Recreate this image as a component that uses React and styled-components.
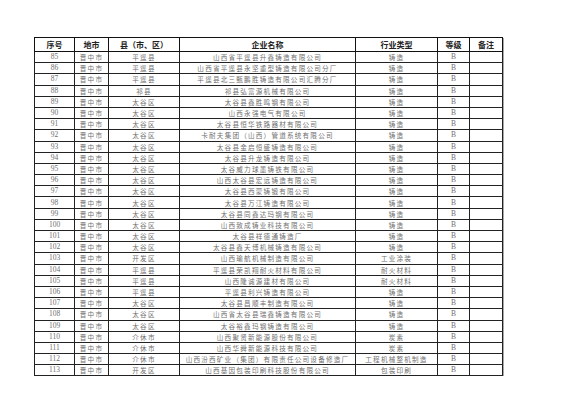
import React from 'react';
import styled, { createGlobalStyle } from 'styled-components';

const GlobalStyle = createGlobalStyle`
  html, body {
    margin: 0;
    padding: 0;
    background: #ffffff;
  }
`;

const rows = [
    [85, '晋中市', '平遥县', '山西省平遥县升鑫铸造有限公司', '铸造'],
    [86, '晋中市', '平遥县', '山西省平遥县永坚重型铸造有限公司分厂', '铸造'],
    [87, '晋中市', '平遥县', '平遥县北三甄鹏胜铸造有限公司汇腾分厂', '铸造'],
    [88, '晋中市', '祁县', '祁县弘富源机械有限公司', '铸造'],
    [89, '晋中市', '太谷区', '太谷县鑫胜鸣钢有限公司', '铸造'],
    [90, '晋中市', '太谷区', '山西永强电气有限公司', '铸造'],
    [91, '晋中市', '太谷区', '太谷县恒华铁路器材有限公司', '铸造'],
    [92, '晋中市', '太谷区', '卡耐夫集团（山西）管道系统有限公司', '铸造'],
    [93, '晋中市', '太谷区', '太谷县金启恒盛铸造有限公司', '铸造'],
    [94, '晋中市', '太谷区', '太谷县升龙铸造有限公司', '铸造'],
    [95, '晋中市', '太谷区', '太谷威力球墨铸铁有限公司', '铸造'],
    [96, '晋中市', '太谷区', '山西太谷县宏远铸造有限公司', '铸造'],
    [97, '晋中市', '太谷区', '太谷县西蒙铸锻有限公司', '铸造'],
    [98, '晋中市', '太谷区', '太谷县万江铸造有限公司', '铸造'],
    [99, '晋中市', '太谷区', '太谷县同鑫达玛钢有限公司', '铸造'],
    [100, '晋中市', '太谷区', '山西致成铸业科技有限公司', '铸造'],
    [101, '晋中市', '太谷区', '太谷县祥德通铸造厂', '铸造'],
    [102, '晋中市', '太谷区', '太谷县鑫天博机械铸造有限公司', '铸造'],
    [103, '晋中市', '开发区', '山西瑜航机械制造有限公司', '工业涂装'],
    [104, '晋中市', '平遥县', '平遥县荣凯翔耐火材料有限公司', '耐火材料'],
    [105, '晋中市', '平遥县', '山西隆诚源建材有限公司', '耐火材料'],
    [106, '晋中市', '平遥县', '平遥县利兴铸造有限公司', '铸造'],
    [107, '晋中市', '太谷区', '太谷县昌顺丰制造有限公司', '铸造'],
    [108, '晋中市', '太谷区', '山西省太谷县瑞鑫铸造有限公司', '铸造'],
    [109, '晋中市', '太谷区', '太谷裕鑫玛钢铸造有限公司', '铸造'],
    [110, '晋中市', '介休市', '山西聚贤新能源股份有限公司', '炭素'],
    [111, '晋中市', '介休市', '山西华舜新能源科技有限公司', '炭素'],
    [112, '晋中市', '介休市', '山西汾西矿业（集团）有限责任公司设备修造厂', '工程机械整机制造'],
    [113, '晋中市', '开发区', '山西基因包装印刷科技股份有限公司', '包装印刷'],
];

const widths = [40, 34, 71, 176, 82, 32, 33];
const headers = ['序号', '地市', '县（市、区）', '企业名称', '行业类型', '等级', '备注'];

const Page = styled.div`
    padding: 37px 0 0 34px;
`;

const Table = styled.table`
    border-collapse: collapse;
    table-layout: fixed;
    width: 468px;
    box-shadow: 1px 1px 0 #a8a8a8;
`;

const HeadCell = styled.th`
    height: 13px;
    padding: 0;
    border: 1px solid #111;
    font-family: "Noto Sans CJK SC", sans-serif;
    font-weight: 700;
    font-size: 8px;
    line-height: 12px;
    color: #222;
    text-align: center;
    white-space: nowrap;
`;

const Cell = styled.td`
    height: 10.2px;
    padding: 0;
    border: 1px solid #222;
    font-family: ${p => p.$num ? '"Liberation Serif", serif' : '"Noto Sans CJK SC", sans-serif'};
    font-size: ${p => p.$num ? '7.5px' : '6.6px'};
    letter-spacing: ${p => p.$num ? '0' : '1.2px'};
    line-height: 10px;
    color: #707070;
    text-align: center;
    white-space: nowrap;
    overflow: visible;
`;

export default function App() {
    return (
        <>
            <GlobalStyle />
            <Page>
                <Table>
                    <colgroup>
                        {widths.map((w, i) => <col key={i} style={{ width: w }} />)}
                    </colgroup>
                    <thead>
                        <tr>
                            {headers.map(h => <HeadCell key={h}>{h}</HeadCell>)}
                        </tr>
                    </thead>
                    <tbody>
                        {rows.map(r => (
                            <tr key={r[0]}>
                                <Cell $num>{r[0]}</Cell>
                                <Cell>{r[1]}</Cell>
                                <Cell>{r[2]}</Cell>
                                <Cell>{r[3]}</Cell>
                                <Cell>{r[4]}</Cell>
                                <Cell $num>B</Cell>
                                <Cell></Cell>
                            </tr>
                        ))}
                    </tbody>
                </Table>
            </Page>
        </>
    );
}
